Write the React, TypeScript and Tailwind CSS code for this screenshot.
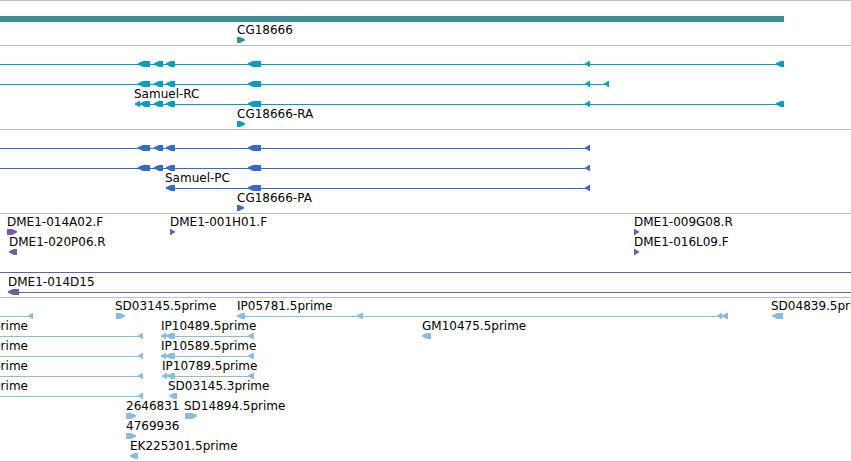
import { clsx } from "clsx";

type Dir = "left" | "right";

type Glyph = { from: number; to: number; dir: Dir };

type Row = {
  // labels sit above the glyphs, anchored at a map position
  labels?: { at: number; text: string }[];
  // intron lines, "edge" runs on to the end of the view
  lines?: [number, number | "edge"][];
  glyphs?: Glyph[];
  bar?: [number, number];
};

type Track = { name: string; color: string; loose?: boolean; rows: Row[] };

const L = (from: number, to: number): Glyph => ({ from, to, dir: "left" });
const R = (from: number, to: number): Glyph => ({ from, to, dir: "right" });

const exons = [L(138, 150), L(154, 163), L(166, 175), L(248, 261), L(585, 590)];

const tracks: Track[] = [
  {
    name: "Genes",
    color: "text-[#3e8e95]",
    loose: true,
    rows: [
      { bar: [0, 784] },
      { labels: [{ at: 237, text: "CG18666" }], glyphs: [R(237, 245)] },
    ],
  },
  {
    name: "Transcripts",
    color: "text-[#009fc0]",
    rows: [
      { lines: [[0, 784]], glyphs: [...exons, L(776, 784)] },
      { lines: [[0, 609]], glyphs: [...exons, L(604, 609)] },
      {
        labels: [{ at: 134, text: "Samuel-RC" }],
        lines: [[135, 784]],
        glyphs: [L(135, 140), L(140, 150), ...exons.slice(1), L(776, 784)],
      },
      { labels: [{ at: 237, text: "CG18666-RA" }], glyphs: [R(237, 245)] },
    ],
  },
  {
    name: "Coding sequences",
    color: "text-[#336ccc]",
    rows: [
      { lines: [[0, 590]], glyphs: exons },
      { lines: [[0, 590]], glyphs: exons },
      {
        labels: [{ at: 165, text: "Samuel-PC" }],
        lines: [[166, 590]],
        glyphs: exons.slice(2),
      },
      { labels: [{ at: 237, text: "CG18666-PA" }], glyphs: [R(237, 244)] },
    ],
  },
  {
    name: "Clones",
    color: "text-[#7659a8]",
    rows: [
      {
        labels: [
          { at: 7, text: "DME1-014A02.F" },
          { at: 170, text: "DME1-001H01.F" },
          { at: 634, text: "DME1-009G08.R" },
        ],
        glyphs: [R(7, 17), R(170, 175), R(634, 639)],
      },
      {
        labels: [
          { at: 9, text: "DME1-020P06.R" },
          { at: 634, text: "DME1-016L09.F" },
        ],
        glyphs: [L(9, 17), R(634, 639)],
      },
      { lines: [[0, "edge"]] },
      {
        labels: [{ at: 8, text: "DME1-014D15" }],
        lines: [[8, "edge"]],
        glyphs: [L(8, 19)],
      },
    ],
  },
  {
    name: "ESTs",
    color: "text-[#88bddd]",
    rows: [
      {
        labels: [
          { at: 115, text: "SD03145.5prime" },
          { at: 237, text: "IP05781.5prime" },
          { at: 771, text: "SD04839.5prime" },
        ],
        lines: [[0, 33], [237, 728]],
        glyphs: [L(28, 33), R(116, 125), L(237, 245), L(357, 363), L(717, 722), L(722, 728), L(772, 783)],
      },
      {
        labels: [
          { at: -7, text: "prime" },
          { at: 161, text: "IP10489.5prime" },
          { at: 422, text: "GM10475.5prime" },
        ],
        lines: [[0, 143], [161, 254]],
        glyphs: [L(138, 143), L(161, 166), L(166, 175), L(248, 254), L(422, 431)],
      },
      {
        labels: [
          { at: -7, text: "prime" },
          { at: 161, text: "IP10589.5prime" },
        ],
        lines: [[0, 143], [161, 254]],
        glyphs: [L(138, 143), L(161, 166), L(166, 175), L(248, 254)],
      },
      {
        labels: [
          { at: -7, text: "prime" },
          { at: 162, text: "IP10789.5prime" },
        ],
        lines: [[0, 143], [162, 254]],
        glyphs: [L(138, 143), L(162, 167), L(167, 175), L(248, 254)],
      },
      {
        labels: [
          { at: -7, text: "prime" },
          { at: 168, text: "SD03145.3prime" },
        ],
        lines: [[0, 143]],
        glyphs: [L(138, 143), L(169, 177)],
      },
      {
        labels: [
          { at: 126, text: "2646831" },
          { at: 184, text: "SD14894.5prime" },
        ],
        glyphs: [R(126, 136), R(185, 197)],
      },
      { labels: [{ at: 126, text: "4769936" }], glyphs: [R(126, 136)] },
      { labels: [{ at: 130, text: "EK225301.5prime" }], glyphs: [L(130, 138)] },
    ],
  },
];

// short features are a bare arrowhead, longer ones get a square body behind it
function glyphPath({ from, to, dir }: Glyph) {
  const s = dir === "left" ? 1 : -1;
  const tip = dir === "left" ? from : to;
  const tail = dir === "left" ? to : from;
  if (to - from < 7) {
    return `M${tip} 2.5L${tip + 3 * s} 0.8L${tail - s} 0H${tail}V6H${tail - s}L${tip + 3 * s} 5L${tip} 3.5Z`;
  }
  return `M${tip} 2.3L${tip + 2 * s} 1.3L${tip + 5 * s} 0H${tail}V6H${tip + 5 * s}L${tip + 2 * s} 4.6L${tip} 3.6Z`;
}

function TrackRow({ row }: { row: Row }) {
  return (
    <div>
      <div className="relative h-3.5 text-black">
        {row.labels?.map(({ at, text }) => (
          <span key={text} className="absolute top-0 whitespace-nowrap" style={{ left: at }}>
            {text}
          </span>
        ))}
      </div>
      <svg className="block h-1.5 w-full" fill="currentColor" aria-hidden="true">
        {row.bar && <rect x={row.bar[0]} y={0} width={row.bar[1] - row.bar[0]} height={6} />}
        {row.lines?.map(([from, to]) => (
          <rect key={from} x={from} y={3} width={to === "edge" ? "100%" : to - from} height={1} />
        ))}
        {row.glyphs?.map((glyph) => (
          <path key={glyph.from} d={glyphPath(glyph)} />
        ))}
      </svg>
    </div>
  );
}

export default function App() {
  return (
    <main className="overflow-hidden border-b border-[#c0c0c0] bg-white font-['DejaVu_Sans',sans-serif] text-[12px] leading-[14px]">
      {tracks.map(({ name, color, loose, rows }) => (
        <section
          key={name}
          aria-label={name}
          className={clsx("flex flex-col border-t border-[#c0c0c0] pt-px pb-0.5", color, loose && "gap-px")}
        >
          {rows.map((row, i) => (
            <TrackRow key={i} row={row} />
          ))}
        </section>
      ))}
    </main>
  );
}
